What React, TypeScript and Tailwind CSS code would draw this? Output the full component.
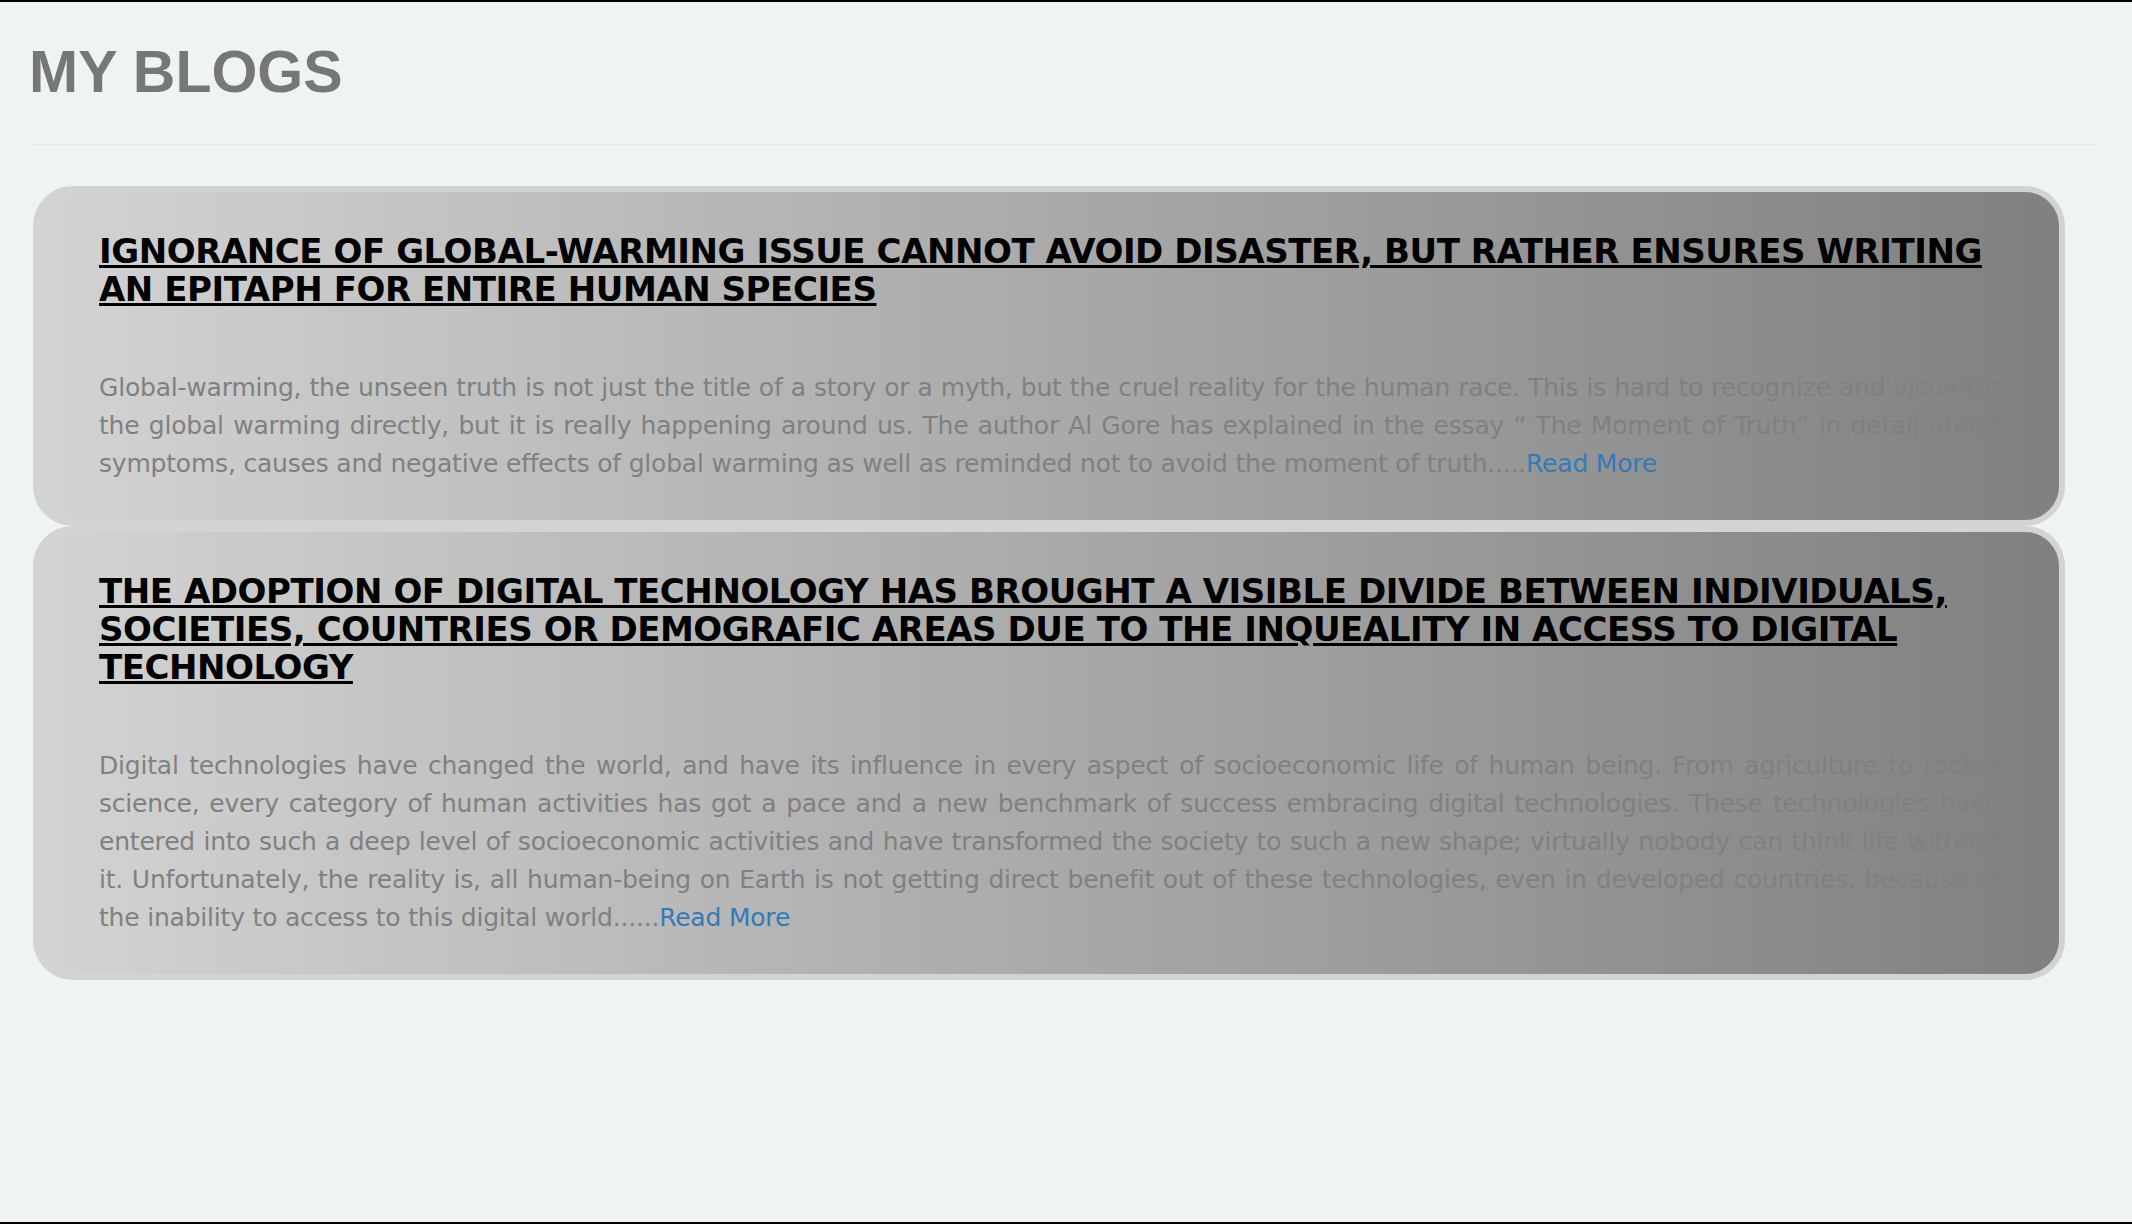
import React from 'react';

type Post = {
  title: string[];
  body: string[];
};

const posts: Post[] = [
  {
    title: [
      'IGNORANCE OF GLOBAL-WARMING ISSUE CANNOT AVOID DISASTER, BUT RATHER ENSURES WRITING',
      'AN EPITAPH FOR ENTIRE HUMAN SPECIES',
    ],
    body: [
      'Global-warming, the unseen truth is not just the title of a story or a myth, but the cruel reality for the human race. This is hard to recognize and visualize',
      'the global warming directly, but it is really happening around us. The author Al Gore has explained in the essay \u201C The Moment of Truth\u201D in detail about',
      'symptoms, causes and negative effects of global warming as well as reminded not to avoid the moment of truth.....',
    ],
  },
  {
    title: [
      'THE ADOPTION OF DIGITAL TECHNOLOGY HAS BROUGHT A VISIBLE DIVIDE BETWEEN INDIVIDUALS,',
      'SOCIETIES, COUNTRIES OR DEMOGRAFIC AREAS DUE TO THE INQUEALITY IN ACCESS TO DIGITAL',
      'TECHNOLOGY',
    ],
    body: [
      'Digital technologies have changed the world, and have its influence in every aspect of socioeconomic life of human being. From agriculture to rocket',
      'science, every category of human activities has got a pace and a new benchmark of success embracing digital technologies. These technologies have',
      'entered into such a deep level of socioeconomic activities and have transformed the society to such a new shape; virtually nobody can think life without',
      'it. Unfortunately, the reality is, all human-being on Earth is not getting direct benefit out of these technologies, even in developed countries, because of',
      'the inability to access to this digital world......',
    ],
  },
];

const BlogCard: React.FC<{ post: Post }> = ({ post }) => {
  const last = post.body.length - 1;
  return (
    <div className="rounded-[40px] border-[6px] border-[#d3d3d3] bg-[linear-gradient(to_right,#d3d3d3,#808080)] pt-[40px] pb-[37px] pl-[60px] pr-[59px] font-['DejaVu_Sans',sans-serif]">
      <h3 className="whitespace-nowrap text-[34px] font-bold leading-[38px] tracking-[-0.44px]">
        <a href="#" className="text-black underline">
          {post.title.map((line, i) => (
            <React.Fragment key={i}>
              {line}
              {i < post.title.length - 1 && <br />}
            </React.Fragment>
          ))}
        </a>
      </h3>
      <p className="mt-[61px] text-justify text-[25px] leading-[38px] tracking-[-0.2px] text-[#808080]">
        {post.body.map((line, i) => (
          <span
            key={i}
            className={i < last ? 'block whitespace-nowrap [text-align-last:justify]' : 'block whitespace-nowrap'}
          >
            {line}
            {i === last && (
              <a href="#" className="text-[#337ab7]">
                Read More
              </a>
            )}
          </span>
        ))}
      </p>
    </div>
  );
};

export default function App() {
  return (
    <div className="h-screen border-y-2 border-black bg-[#eef4f4] font-['Liberation_Sans',Arial,sans-serif]">
      <h1 className="ml-[29px] mt-[41px] text-[59px] font-bold leading-none text-[#777777]">MY BLOGS</h1>
      <hr className="ml-[30px] mr-[34px] mt-[42px] border-t border-[#e6eaea]" />
      <div className="ml-[33px] mt-[41px] w-[2032px]">
        {posts.map((post, i) => (
          <BlogCard key={i} post={post} />
        ))}
      </div>
    </div>
  );
}
